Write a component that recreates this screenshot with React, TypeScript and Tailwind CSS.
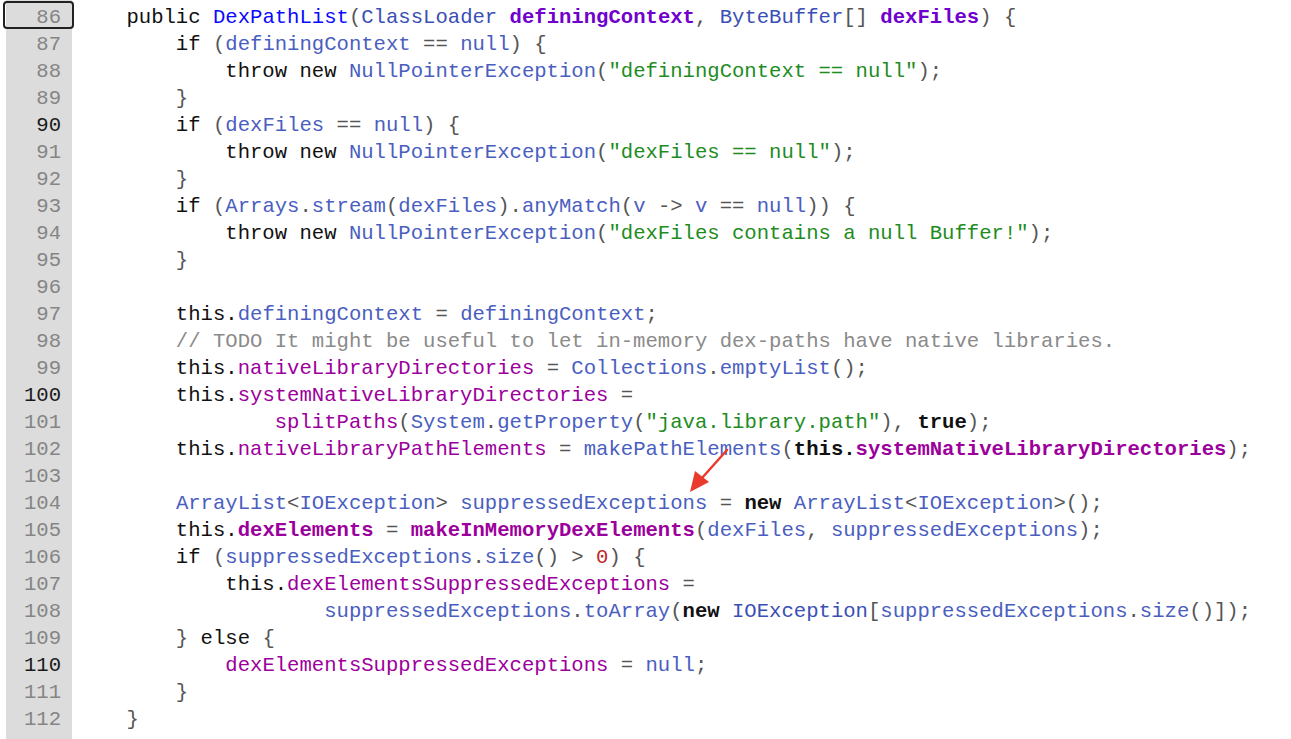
import React from "react";

type Tok = [string, string];

const styles: Record<string, string> = {
    k: "text-[#111111]",
    kb: "text-[#111111] font-bold",
    t: "text-[#0a0aff]",
    c: "text-[#3a4fb5]",
    p: "text-[#7000cc] font-bold",
    v: "text-[#4a5ec0]",
    f: "text-[#9c009c]",
    fb: "text-[#9c009c] font-bold",
    s: "text-[#1e8c1e]",
    m: "text-[#8a8a8a]",
    o: "text-[#555555]",
    r: "text-[#c02828]",
};

const lines: { n: number; dark?: boolean; toks: Tok[] }[] = [
    { n: 86, toks: [["    public ", "k"], ["DexPathList", "t"], ["(", "o"], ["ClassLoader ", "c"], ["definingContext", "p"], [", ", "o"], ["ByteBuffer", "c"], ["[] ", "o"], ["dexFiles", "p"], [") {", "o"]] },
    { n: 87, toks: [["        if ", "k"], ["(", "o"], ["definingContext", "v"], [" == ", "o"], ["null", "v"], [") {", "o"]] },
    { n: 88, toks: [["            throw new ", "k"], ["NullPointerException", "v"], ["(", "o"], ["\"definingContext == null\"", "s"], [");", "o"]] },
    { n: 89, toks: [["        }", "o"]] },
    { n: 90, dark: true, toks: [["        if ", "k"], ["(", "o"], ["dexFiles", "v"], [" == ", "o"], ["null", "v"], [") {", "o"]] },
    { n: 91, toks: [["            throw new ", "k"], ["NullPointerException", "v"], ["(", "o"], ["\"dexFiles == null\"", "s"], [");", "o"]] },
    { n: 92, toks: [["        }", "o"]] },
    { n: 93, toks: [["        if ", "k"], ["(", "o"], ["Arrays", "v"], [".", "o"], ["stream", "v"], ["(", "o"], ["dexFiles", "v"], [").", "o"], ["anyMatch", "v"], ["(", "o"], ["v", "v"], [" -> ", "o"], ["v", "v"], [" == ", "o"], ["null", "v"], [")) {", "o"]] },
    { n: 94, toks: [["            throw new ", "k"], ["NullPointerException", "v"], ["(", "o"], ["\"dexFiles contains a null Buffer!\"", "s"], [");", "o"]] },
    { n: 95, toks: [["        }", "o"]] },
    { n: 96, toks: [] },
    { n: 97, toks: [["        this.", "k"], ["definingContext", "v"], [" = ", "o"], ["definingContext", "v"], [";", "o"]] },
    { n: 98, toks: [["        // TODO It might be useful to let in-memory dex-paths have native libraries.", "m"]] },
    { n: 99, toks: [["        this.", "k"], ["nativeLibraryDirectories", "f"], [" = ", "o"], ["Collections", "v"], [".", "o"], ["emptyList", "v"], ["();", "o"]] },
    { n: 100, dark: true, toks: [["        this.", "k"], ["systemNativeLibraryDirectories", "f"], [" =", "o"]] },
    { n: 101, toks: [["                ", "o"], ["splitPaths", "f"], ["(", "o"], ["System", "v"], [".", "o"], ["getProperty", "v"], ["(", "o"], ["\"java.library.path\"", "s"], ["), ", "o"], ["true", "kb"], [");", "o"]] },
    { n: 102, toks: [["        this.", "k"], ["nativeLibraryPathElements", "f"], [" = ", "o"], ["makePathElements", "v"], ["(", "o"], ["this.", "kb"], ["systemNativeLibraryDirectories", "fb"], [");", "o"]] },
    { n: 103, toks: [] },
    { n: 104, toks: [["        ", "o"], ["ArrayList", "v"], ["<", "o"], ["IOException", "v"], ["> ", "o"], ["suppressedExceptions", "v"], [" = ", "o"], ["new ", "kb"], ["ArrayList", "v"], ["<", "o"], ["IOException", "v"], [">();", "o"]] },
    { n: 105, toks: [["        this.", "k"], ["dexElements", "fb"], [" = ", "o"], ["makeInMemoryDexElements", "fb"], ["(", "o"], ["dexFiles", "v"], [", ", "o"], ["suppressedExceptions", "v"], [");", "o"]] },
    { n: 106, toks: [["        if ", "k"], ["(", "o"], ["suppressedExceptions", "v"], [".", "o"], ["size", "v"], ["() > ", "o"], ["0", "r"], [") {", "o"]] },
    { n: 107, toks: [["            this.", "k"], ["dexElementsSuppressedExceptions", "f"], [" =", "o"]] },
    { n: 108, toks: [["                    ", "o"], ["suppressedExceptions", "v"], [".", "o"], ["toArray", "v"], ["(", "o"], ["new ", "kb"], ["IOException", "c"], ["[", "o"], ["suppressedExceptions", "v"], [".", "o"], ["size", "v"], ["()]);", "o"]] },
    { n: 109, toks: [["        } ", "o"], ["else", "k"], [" {", "o"]] },
    { n: 110, dark: true, toks: [["            ", "o"], ["dexElementsSuppressedExceptions", "f"], [" = ", "o"], ["null", "v"], [";", "o"]] },
    { n: 111, toks: [["        }", "o"]] },
    { n: 112, toks: [["    }", "o"]] },
    { n: 113, toks: [] },
];

export default function App() {
    return (
        <div className="relative w-[1291px] h-[739px] overflow-hidden bg-white font-['Liberation_Mono',monospace] text-[20.6px]">
            <div className="flex h-full">
                {/* gutter */}
                <div className="ml-[6px] w-[66px] h-full bg-[#dcdcdc] pt-[4px] shrink-0">
                    {lines.map((l) => (
                        <div
                            key={l.n}
                            className={`relative h-[27px] leading-[27px] text-right pr-[11px] ${l.dark ? "text-[#1a1a1a]" : "text-[#858585]"}`}
                        >
                            {l.n === 86 && (
                                <div className="absolute left-[-3px] right-[-2px] top-[-3px] bottom-[2px] border-2 border-[#222222] rounded-[4px]" />
                            )}
                            {l.n}
                        </div>
                    ))}
                </div>

                {/* code */}
                <div className="pl-[5px] pt-[4px] flex-1">
                    {lines.map((l) => (
                        <div key={l.n} className="h-[27px] leading-[27px] whitespace-pre">
                            {l.toks.map(([text, s], i) => (
                                <span key={i} className={styles[s]}>
                                    {text}
                                </span>
                            ))}
                        </div>
                    ))}
                </div>
            </div>

            {/* red annotation arrow */}
            <svg className="absolute left-[680px] top-[444px]" width="60" height="56" viewBox="0 0 60 56">
                <line x1="47" y1="6" x2="22" y2="34" stroke="#ea3a2e" strokeWidth="2.5" strokeLinecap="round" />
                <polygon points="10,48 15,27 29,38" fill="#ea3a2e" />
            </svg>
        </div>
    );
}
